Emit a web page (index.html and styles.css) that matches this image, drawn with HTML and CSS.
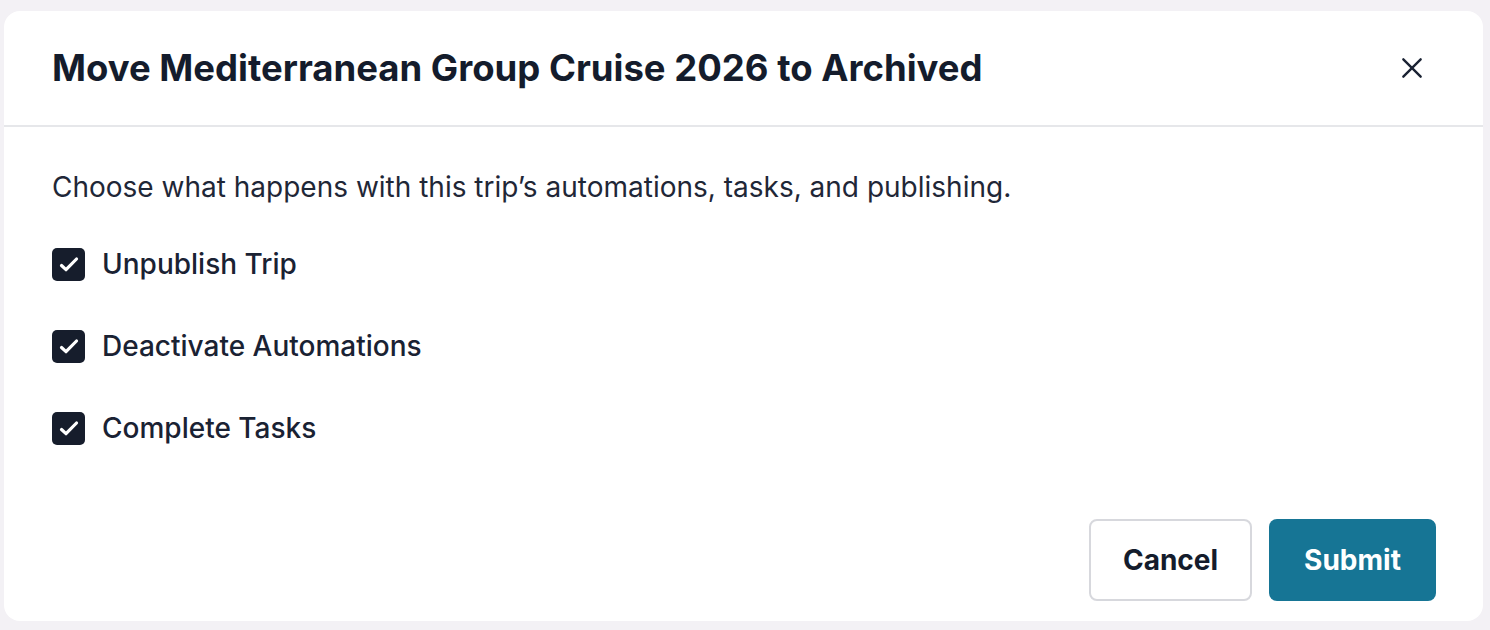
FILE: index.html
```html
<!DOCTYPE html>
<html>
<head>
<meta charset="utf-8">
<link rel="stylesheet" href="styles.css">
</head>
<body>
<div class="modal">
  <div class="modal-header">
    <h1 class="title">Move Mediterranean Group Cruise 2026 to Archived</h1>
    <button class="close" aria-label="Close">
      <svg width="26" height="26" viewBox="0 0 24 24" fill="none" stroke="#1a2233" stroke-width="2.2" stroke-linecap="round"><path d="M4 4L20 20M20 4L4 20"/></svg>
    </button>
  </div>
  <div class="modal-body">
    <p class="desc">Choose what happens with this trip’s automations, tasks, and publishing.</p>
    <label class="option"><span class="box"><svg width="33" height="33" viewBox="0 0 33 33" fill="none" stroke="#fff" stroke-width="3.2" stroke-linecap="round" stroke-linejoin="round"><path d="M9.5 17.5l4.5 4.2L24.5 11"/></svg></span><span class="label">Unpublish Trip</span></label>
    <label class="option"><span class="box"><svg width="33" height="33" viewBox="0 0 33 33" fill="none" stroke="#fff" stroke-width="3.2" stroke-linecap="round" stroke-linejoin="round"><path d="M9.5 17.5l4.5 4.2L24.5 11"/></svg></span><span class="label">Deactivate Automations</span></label>
    <label class="option"><span class="box"><svg width="33" height="33" viewBox="0 0 33 33" fill="none" stroke="#fff" stroke-width="3.2" stroke-linecap="round" stroke-linejoin="round"><path d="M9.5 17.5l4.5 4.2L24.5 11"/></svg></span><span class="label">Complete Tasks</span></label>
  </div>
  <div class="modal-footer">
    <button class="btn btn-cancel">Cancel</button>
    <button class="btn btn-submit">Submit</button>
  </div>
</div>
</body>
</html>
```
FILE: styles.css
```css
html, body { margin: 0; padding: 0; }
body {
  background: #f3f1f5;
  font-family: Inter, "Noto Sans", sans-serif;
  color: #1a2233;
  width: 1490px;
  height: 630px;
  overflow: hidden;
  padding: 11px 7px 9px 4px;
  box-sizing: border-box;
}
.modal {
  background: #fff;
  border-radius: 16px;
  height: 610px;
  display: flex;
  flex-direction: column;
  box-sizing: border-box;
}
.modal-header {
  display: flex;
  align-items: center;
  justify-content: space-between;
  height: 116px;
  padding: 0 58px 0 48px;
  border-bottom: 2px solid #e6e7ea;
  box-sizing: border-box;
}
.title {
  margin: 0;
  font-size: 36.5px;
  font-weight: 700;
  color: #141c2c;
}
.close {
  background: none;
  border: none;
  padding: 0;
  width: 26px;
  height: 26px;
  display: flex;
}
.modal-body {
  padding: 40px 48px 0 48px;
  flex: 1;
}
.desc {
  margin: 0 0 37px 0;
  font-size: 28px;
  line-height: 40px;
  color: #1f2737;
}
.option {
  display: flex;
  align-items: center;
  gap: 17px;
  height: 40px;
  margin-bottom: 42px;
}
.box {
  width: 33px;
  height: 33px;
  background: #161d2c;
  border-radius: 5px;
  display: flex;
  align-items: center;
  justify-content: center;
}
.label {
  font-size: 28px;
  font-weight: 500;
  color: #1a2233;
}
.modal-footer {
  display: flex;
  justify-content: flex-end;
  gap: 17px;
  padding: 0 47px 20px 0;
}
.btn {
  height: 82px;
  border-radius: 8px;
  font-family: Inter, "Noto Sans", sans-serif;
  font-size: 28px;
  font-weight: 700;
  padding: 0;
  cursor: pointer;
}
.btn-cancel {
  width: 163px;
  background: #fff;
  border: 2px solid #d7d8dd;
  color: #141c2c;
}
.btn-submit {
  width: 167px;
  background: #167595;
  border: none;
  color: #fff;
}
```
